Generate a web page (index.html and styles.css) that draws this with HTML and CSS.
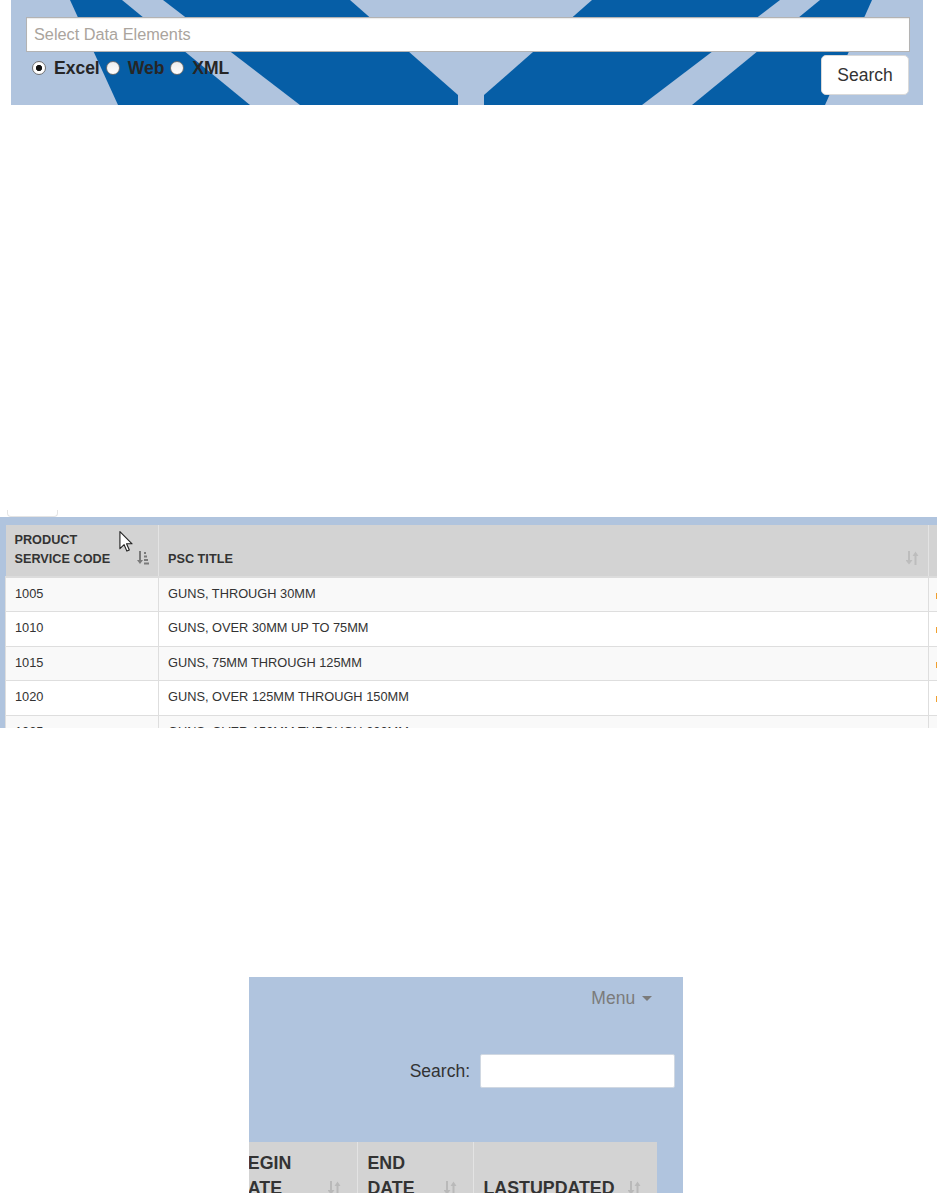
FILE: index.html
```html
<!DOCTYPE html>
<html>
<head>
    <meta charset="UTF-8">
    <meta name="viewport" content="width=device-width, initial-scale=1.0">
    <title>PSC Data Search</title>
    <link rel="stylesheet" href="styles.css">
</head>
<body>
    <!-- search form -->
    <div class="search-panel">
        <svg class="search-bg" width="912" height="105" viewBox="0 0 912 105">
            <polygon fill="#065ea6" points="59,0 339,0 447,95 447,105 107,105"/>
            <polygon fill="#b0c4de" points="111,0 152,0 289,105 239,105"/>
            <polygon fill="#065ea6" points="581,0 861,0 814,105 473,105 473,95"/>
            <polygon fill="#b0c4de" points="769,0 809,0 681,105 631,105"/>
        </svg>
        <input type="text" class="elements" placeholder="Select Data Elements">
        <div class="form-row">
            <div class="formats">
                <label class="opt"><input type="radio" name="fmt" checked>Excel</label>
                <label class="opt"><input type="radio" name="fmt">Web</label>
                <label class="opt"><input type="radio" name="fmt">XML</label>
            </div>
            <button class="btn">Search</button>
        </div>
    </div>

    <!-- results grid -->
    <div class="tab-stub"></div>
    <div class="results">
        <svg class="cursor" width="14" height="21" viewBox="0 0 12 19">
            <path d="M0.5 0.5V16L4.3 12.4L6.8 18.2L9 17.2L6.5 11.6H11.5Z" fill="#fff" stroke="#222" stroke-width="1" stroke-linejoin="round"/>
        </svg>
        <table class="grid small">
            <colgroup>
                <col style="width:153px">
                <col style="width:770px">
                <col style="width:100px">
            </colgroup>
            <thead>
                <tr>
                    <th class="sorted">PRODUCT<br>SERVICE CODE
                        <svg class="sort" width="12" height="14" viewBox="0 0 12 14"><path d="M2 0h2v9h2l-3 4-3-4h2z" fill="currentColor"/><rect x="7" y="1" width="2" height="2" fill="currentColor"/><rect x="7" y="4.5" width="3" height="2" fill="currentColor"/><rect x="7" y="8" width="4" height="2" fill="currentColor"/><rect x="7" y="11.5" width="5" height="2" fill="currentColor"/></svg>
                    </th>
                    <th>PSC TITLE
                        <svg class="sort" width="13" height="14" viewBox="0 0 13 14"><path d="M2 0h2v9h2.5l-3.5 4.5-3.5-4.5h2.5z M8.5 14V5H6.5L9.5 0.5L12.5 5H10.5V14Z" fill="currentColor"/></svg>
                    </th>
                    <th></th>
                </tr>
            </thead>
            <tbody>
                <tr><td>1005</td><td>GUNS, THROUGH 30MM</td><td><span class="act"></span></td></tr>
                <tr><td>1010</td><td>GUNS, OVER 30MM UP TO 75MM</td><td><span class="act"></span></td></tr>
                <tr><td>1015</td><td>GUNS, 75MM THROUGH 125MM</td><td><span class="act"></span></td></tr>
                <tr><td>1020</td><td>GUNS, OVER 125MM THROUGH 150MM</td><td><span class="act"></span></td></tr>
                <tr><td>1025</td><td>GUNS, OVER 150MM THROUGH 200MM</td><td><span class="act"></span></td></tr>
            </tbody>
        </table>
    </div>

    <!-- detail view -->
    <div class="details">
        <div class="nav"><span class="menu">Menu <span class="caret"></span></span></div>
        <div class="filter">
            <label>Search:</label>
            <input type="search">
        </div>
        <table class="grid big">
            <colgroup>
                <col style="width:132px">
                <col style="width:116px">
                <col style="width:184px">
            </colgroup>
            <thead>
                <tr>
                    <th>BEGIN<br>DATE
                        <svg class="sort" width="13" height="14" viewBox="0 0 13 14"><path d="M2 0h2v9h2.5l-3.5 4.5-3.5-4.5h2.5z M8.5 14V5H6.5L9.5 0.5L12.5 5H10.5V14Z" fill="currentColor"/></svg>
                    </th>
                    <th>END<br>DATE
                        <svg class="sort" width="13" height="14" viewBox="0 0 13 14"><path d="M2 0h2v9h2.5l-3.5 4.5-3.5-4.5h2.5z M8.5 14V5H6.5L9.5 0.5L12.5 5H10.5V14Z" fill="currentColor"/></svg>
                    </th>
                    <th>LASTUPDATED
                        <svg class="sort" width="13" height="14" viewBox="0 0 13 14"><path d="M2 0h2v9h2.5l-3.5 4.5-3.5-4.5h2.5z M8.5 14V5H6.5L9.5 0.5L12.5 5H10.5V14Z" fill="currentColor"/></svg>
                    </th>
                </tr>
            </thead>
        </table>
    </div>
</body>
</html>
```

FILE: styles.css
```css
html, body {
    margin: 0;
    padding: 0;
    background: #fff;
    width: 937px;
    height: 1193px;
    overflow: hidden;
    font-family: "Liberation Sans", Arial, sans-serif;
    color: #333;
}

/* search form */
.search-panel {
    position: relative;
    box-sizing: border-box;
    width: 912px;
    height: 105px;
    margin-left: 11px;
    padding: 17px 13px 0 15px;
    background: #b0c4de;
}
.search-bg {
    position: absolute;
    left: 0;
    top: 0;
}
.elements, .form-row {
    position: relative;
}
.elements {
    display: block;
    box-sizing: border-box;
    width: 100%;
    height: 35px;
    margin: 0;
    padding: 0 7px;
    border: 1px solid #b3b3b3;
    box-shadow: inset 0 1px 1px rgba(0,0,0,0.08);
    background: #fff;
    font-family: inherit;
    font-size: 16.3px;
}
.elements::placeholder {
    color: #aaa49d;
}
.form-row {
    display: flex;
    justify-content: space-between;
    align-items: flex-start;
    margin-top: 3px;
}
.formats {
    display: flex;
    margin-top: 3px;
    padding-left: 6px;
    line-height: 20px;
    font-size: 17.5px;
    font-weight: bold;
    color: #262626;
}
.opt {
    display: inline-flex;
    align-items: center;
    gap: 8px;
    margin-right: 6px;
}
.opt input {
    appearance: none;
    -webkit-appearance: none;
    box-sizing: border-box;
    width: 14px;
    height: 14px;
    margin: 0;
    border: 1px solid #707070;
    border-radius: 50%;
    background: linear-gradient(#ededed, #fff);
}
.opt input:checked {
    background: radial-gradient(circle, #111 0, #111 2.8px, #fff 3.4px);
}
.btn {
    box-sizing: border-box;
    width: 88px;
    height: 40px;
    margin-right: 1px;
    padding: 0;
    border: 1px solid #d9d9d9;
    border-radius: 5px;
    background: #fff;
    color: #333;
    font-family: inherit;
    font-size: 17.5px;
}

/* results grid */
.tab-stub {
    box-sizing: border-box;
    width: 51px;
    height: 7px;
    margin: 405px 0 0 7px;
    border: 1px solid #e4e4e4;
    border-top: none;
    border-radius: 0 0 4px 4px;
}
.results {
    position: relative;
    box-sizing: border-box;
    width: 937px;
    height: 211px;
    padding: 8px 0 0 5px;
    background: #b0c4de;
    overflow: hidden;
}
.cursor {
    position: absolute;
    left: 119px;
    top: 14px;
    z-index: 2;
}
.grid {
    border-collapse: collapse;
    table-layout: fixed;
}
.grid th {
    position: relative;
    text-align: left;
    vertical-align: bottom;
    font-weight: bold;
    background: #d3d3d3;
    border-left: 1px solid #e3e3e3;
}
.grid th:first-child {
    border-left: none;
}
.grid .sort {
    position: absolute;
    color: #bdbdbd;
}
.small {
    width: 1023px;
    font-size: 12.8px;
}
.small th {
    padding: 6px 9px 7px;
    line-height: 19px;
    font-size: 12.7px;
    border-bottom: 2px solid #dcdcdc;
}
.small .sort {
    right: 9px;
    bottom: 11px;
}
.small th.sorted .sort {
    color: #7a7a7a;
}
.small td {
    padding: 7px 9px 9px;
    line-height: 17.4px;
    border: 1px solid #dedede;
    background: #fff;
    white-space: nowrap;
}
.small tbody tr:nth-child(odd) td {
    background: #f9f9f9;
}
.small .act {
    display: inline-block;
    width: 2px;
    height: 6px;
    margin-left: -2px;
    vertical-align: -1px;
    background: #f0a030;
}

/* detail view */
.details {
    box-sizing: border-box;
    width: 434px;
    height: 216px;
    margin: 249px 0 0 249px;
    background: #b0c4de;
    overflow: hidden;
}
.nav {
    display: flex;
    justify-content: flex-end;
    align-items: center;
    height: 42px;
    padding-right: 31px;
}
.menu {
    font-size: 17.5px;
    color: #7b7b7b;
}
.caret {
    display: inline-block;
    width: 0;
    height: 0;
    margin-left: 2px;
    vertical-align: middle;
    border-top: 5px solid #7b7b7b;
    border-left: 5px solid transparent;
    border-right: 5px solid transparent;
}
.filter {
    display: flex;
    justify-content: flex-end;
    align-items: center;
    gap: 10px;
    margin-top: 35px;
    padding-right: 8px;
    font-size: 17.5px;
}
.filter input {
    box-sizing: border-box;
    width: 195px;
    height: 34px;
    margin: 0;
    border: 1px solid #d0d8e2;
    border-radius: 2px;
    background: #fff;
}
.big {
    width: 432px;
    margin: 54px 0 0 -24px;
}
.big th {
    padding: 8.5px 10px;
    line-height: 25px;
    font-size: 17.8px;
}
.big .sort {
    right: 16px;
    bottom: 14px;
    color: #b9b9b9;
}
```
